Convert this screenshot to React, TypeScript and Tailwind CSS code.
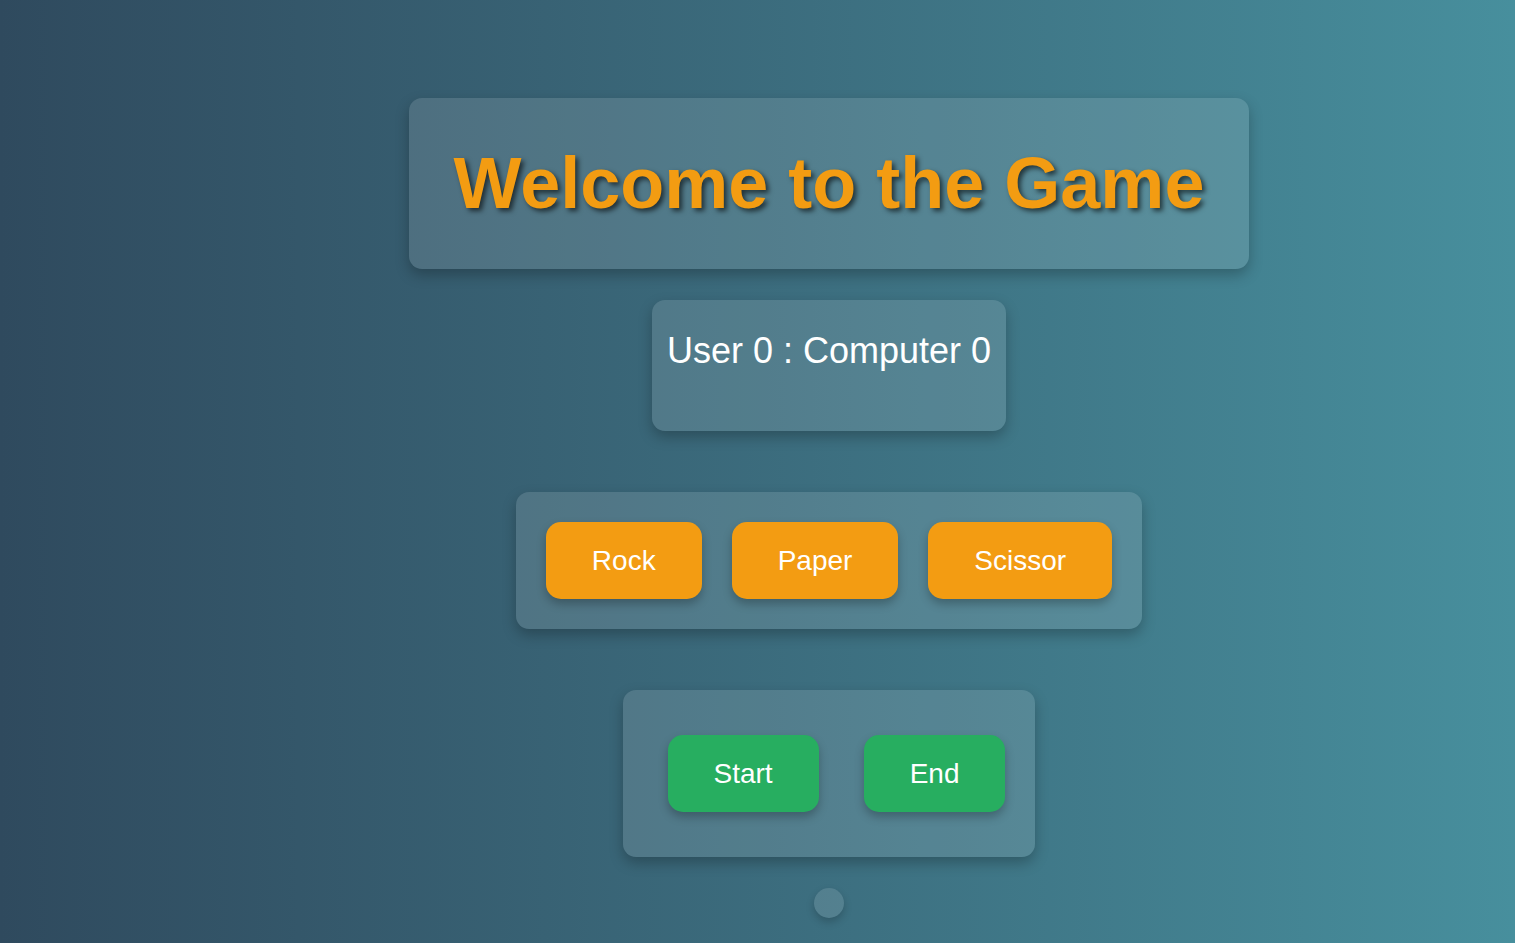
const choices = ["Rock", "Paper", "Scissor"];

const App = () => {
  return (
    <div className="min-h-screen w-full bg-gradient-to-r from-[#2f4a5e] to-[#478f9d] font-['Liberation_Sans',Arial,sans-serif] text-white">
      <div className="flex flex-col items-center pl-[143px] pt-[98px] pb-[25px]">
        <div className="rounded-[13px] bg-white/[0.12] px-[45px] py-[44px] shadow-[0_6px_14px_rgba(0,0,0,0.25)]">
          <h1 className="text-[72px] font-bold leading-[83px] text-[#f39c12] [text-shadow:3px_3px_5px_rgba(0,0,0,0.6)]">
            Welcome to the Game
          </h1>
        </div>

        <div className="mt-[31px] rounded-[13px] bg-white/[0.12] px-[15px] pt-[30px] pb-[60px] shadow-[0_6px_14px_rgba(0,0,0,0.25)]">
          <h2 className="text-[36px] leading-[41px]">User 0 : Computer 0</h2>
        </div>

        <div className="mt-[61px] flex gap-[30px] rounded-[13px] bg-white/[0.12] p-[30px] shadow-[0_6px_14px_rgba(0,0,0,0.25)]">
          {choices.map((c) => (
            <button
              key={c}
              className="flex h-[77px] items-center rounded-[15px] bg-[#f39c12] px-[46px] text-[28px] text-white shadow-[0_5px_10px_rgba(0,0,0,0.25)]"
            >
              {c}
            </button>
          ))}
        </div>

        <div className="mt-[61px] flex gap-[45px] rounded-[13px] bg-white/[0.12] py-[45px] pl-[45px] pr-[30px] shadow-[0_6px_14px_rgba(0,0,0,0.25)]">
          <button className="flex h-[77px] items-center rounded-[15px] bg-[#27ae60] px-[46px] text-[28px] text-white shadow-[0_5px_10px_rgba(0,0,0,0.25)]">
            Start
          </button>
          <button className="flex h-[77px] items-center rounded-[15px] bg-[#27ae60] px-[46px] text-[28px] text-white shadow-[0_5px_10px_rgba(0,0,0,0.25)]">
            End
          </button>
        </div>

        <div className="mt-[31px] h-[30px] w-[30px] rounded-full bg-white/[0.12] shadow-[0_4px_8px_rgba(0,0,0,0.2)]" />
      </div>
    </div>
  );
};

export default App;
